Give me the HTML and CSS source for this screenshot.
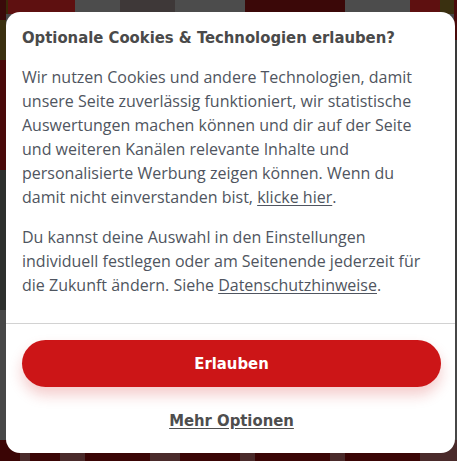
FILE: index.html
```html
<!DOCTYPE html>
<html lang="de">
<head>
<meta charset="utf-8">
<title>Cookies</title>
<link rel="stylesheet" href="styles.css">
</head>
<body>
<div class="backdrop">
  <div class="dialog" role="dialog" aria-labelledby="dlg-title">
    <div class="content">
      <h2 class="title" id="dlg-title">Optionale Cookies &amp; Technologien erlauben?</h2>
      <p class="text">Wir nutzen Cookies und andere Technologien, damit unsere Seite zuverlässig funktioniert, wir statistische Auswertungen machen können und dir auf der Seite und weiteren Kanälen relevante Inhalte und personalisierte Werbung zeigen können. Wenn du damit nicht einverstanden bist, <a class="link" href="#">klicke hier</a>.</p>
      <p class="text">Du kannst deine Auswahl in den Einstellungen individuell festlegen oder am Seitenende jederzeit für die Zukunft ändern. Siehe <a class="link" href="#">Datenschutzhinweise</a>.</p>
    </div>
    <div class="actions">
      <button class="btn-primary" type="button">Erlauben</button>
      <a class="more" href="#">Mehr Optionen</a>
    </div>
  </div>
</div>
</body>
</html>
```
FILE: styles.css
```css
* { box-sizing: border-box; }
html, body { margin: 0; padding: 0; }
body {
  width: 457px;
  height: 461px;
  overflow: hidden;
  background-color: #474747;
  background-image:
    linear-gradient(to right, #3a0505 0 20px, #4a2a2a 20px 30px, #3a0505 30px 60px, #4a2a2a 60px 85px, #3a0505 85px 150px, #4a2a2a 150px 180px, #3a0505 180px 240px, #4a2a2a 240px 255px, #3a0505 255px 330px, #4a2a2a 330px 345px, #3a0505 345px 420px, #4a2a2a 420px),
    linear-gradient(to bottom, #3a0a0a 0 20px, #3b3010 20px 60px, #4a0a0a 60px 170px, #2d302d 170px 310px, #474747 310px 440px, #3a0303 440px),
    linear-gradient(to bottom, #4a0a0a 0 40px, #3a3a3a 40px 300px, #474747 300px),
    linear-gradient(to right, #3a2a08 0 8px, #5e1010 8px 75px, #4c4c4c 75px 120px, #3e3838 120px 175px, #4c4c4c 175px 245px, #3b0808 245px 345px, #4c4c4c 345px 410px, #5e1010 410px 440px, #3a3010 440px);
  background-size: 100% 21px, 6px 100%, 3px 100%, 100% 14px;
  background-position: left bottom, left top, right top, left top;
  background-repeat: no-repeat;
  font-family: "Open Sans", "Liberation Sans", sans-serif;
}
.backdrop {
  padding: 12px 2px 8px 6px;
}
.dialog {
  width: 449px;
  height: 441px;
  background: #ffffff;
  border-radius: 14px;
  display: flex;
  flex-direction: column;
  overflow: hidden;
}
.content {
  padding: 14px 16px 0 16px;
  height: 312px;
  border-bottom: 1px solid #d2d2d2;
}
.title {
  margin: 0 0 15px 0;
  font-family: "DejaVu Sans Condensed", "Liberation Sans Narrow", sans-serif;
  font-weight: 700;
  font-size: 16.5px;
  line-height: 24px;
  color: #4a4a4a;
}
.text {
  margin: 0 0 16px 0;
  font-size: 16px;
  line-height: 24px;
  color: #4f5560;
}
.link {
  color: #4f5560;
  text-decoration: underline;
  text-underline-offset: 2px;
}
.actions {
  display: flex;
  flex-direction: column;
  align-items: center;
  padding: 16px 14px 0 16px;
}
.btn-primary {
  width: 100%;
  height: 47px;
  border: none;
  border-radius: 24px;
  background: #cc1517;
  color: #ffffff;
  font-family: "DejaVu Sans Condensed", "Liberation Sans Narrow", sans-serif;
  font-weight: 700;
  font-size: 16.5px;
  box-shadow: 0 8px 14px rgba(204, 21, 23, 0.22);
  cursor: pointer;
}
.more {
  margin-top: 22px;
  font-family: "DejaVu Sans Condensed", "Liberation Sans Narrow", sans-serif;
  font-weight: 700;
  font-size: 16.5px;
  line-height: 24px;
  color: #4e4e4e;
  text-decoration: underline;
  text-underline-offset: 2px;
}
```
